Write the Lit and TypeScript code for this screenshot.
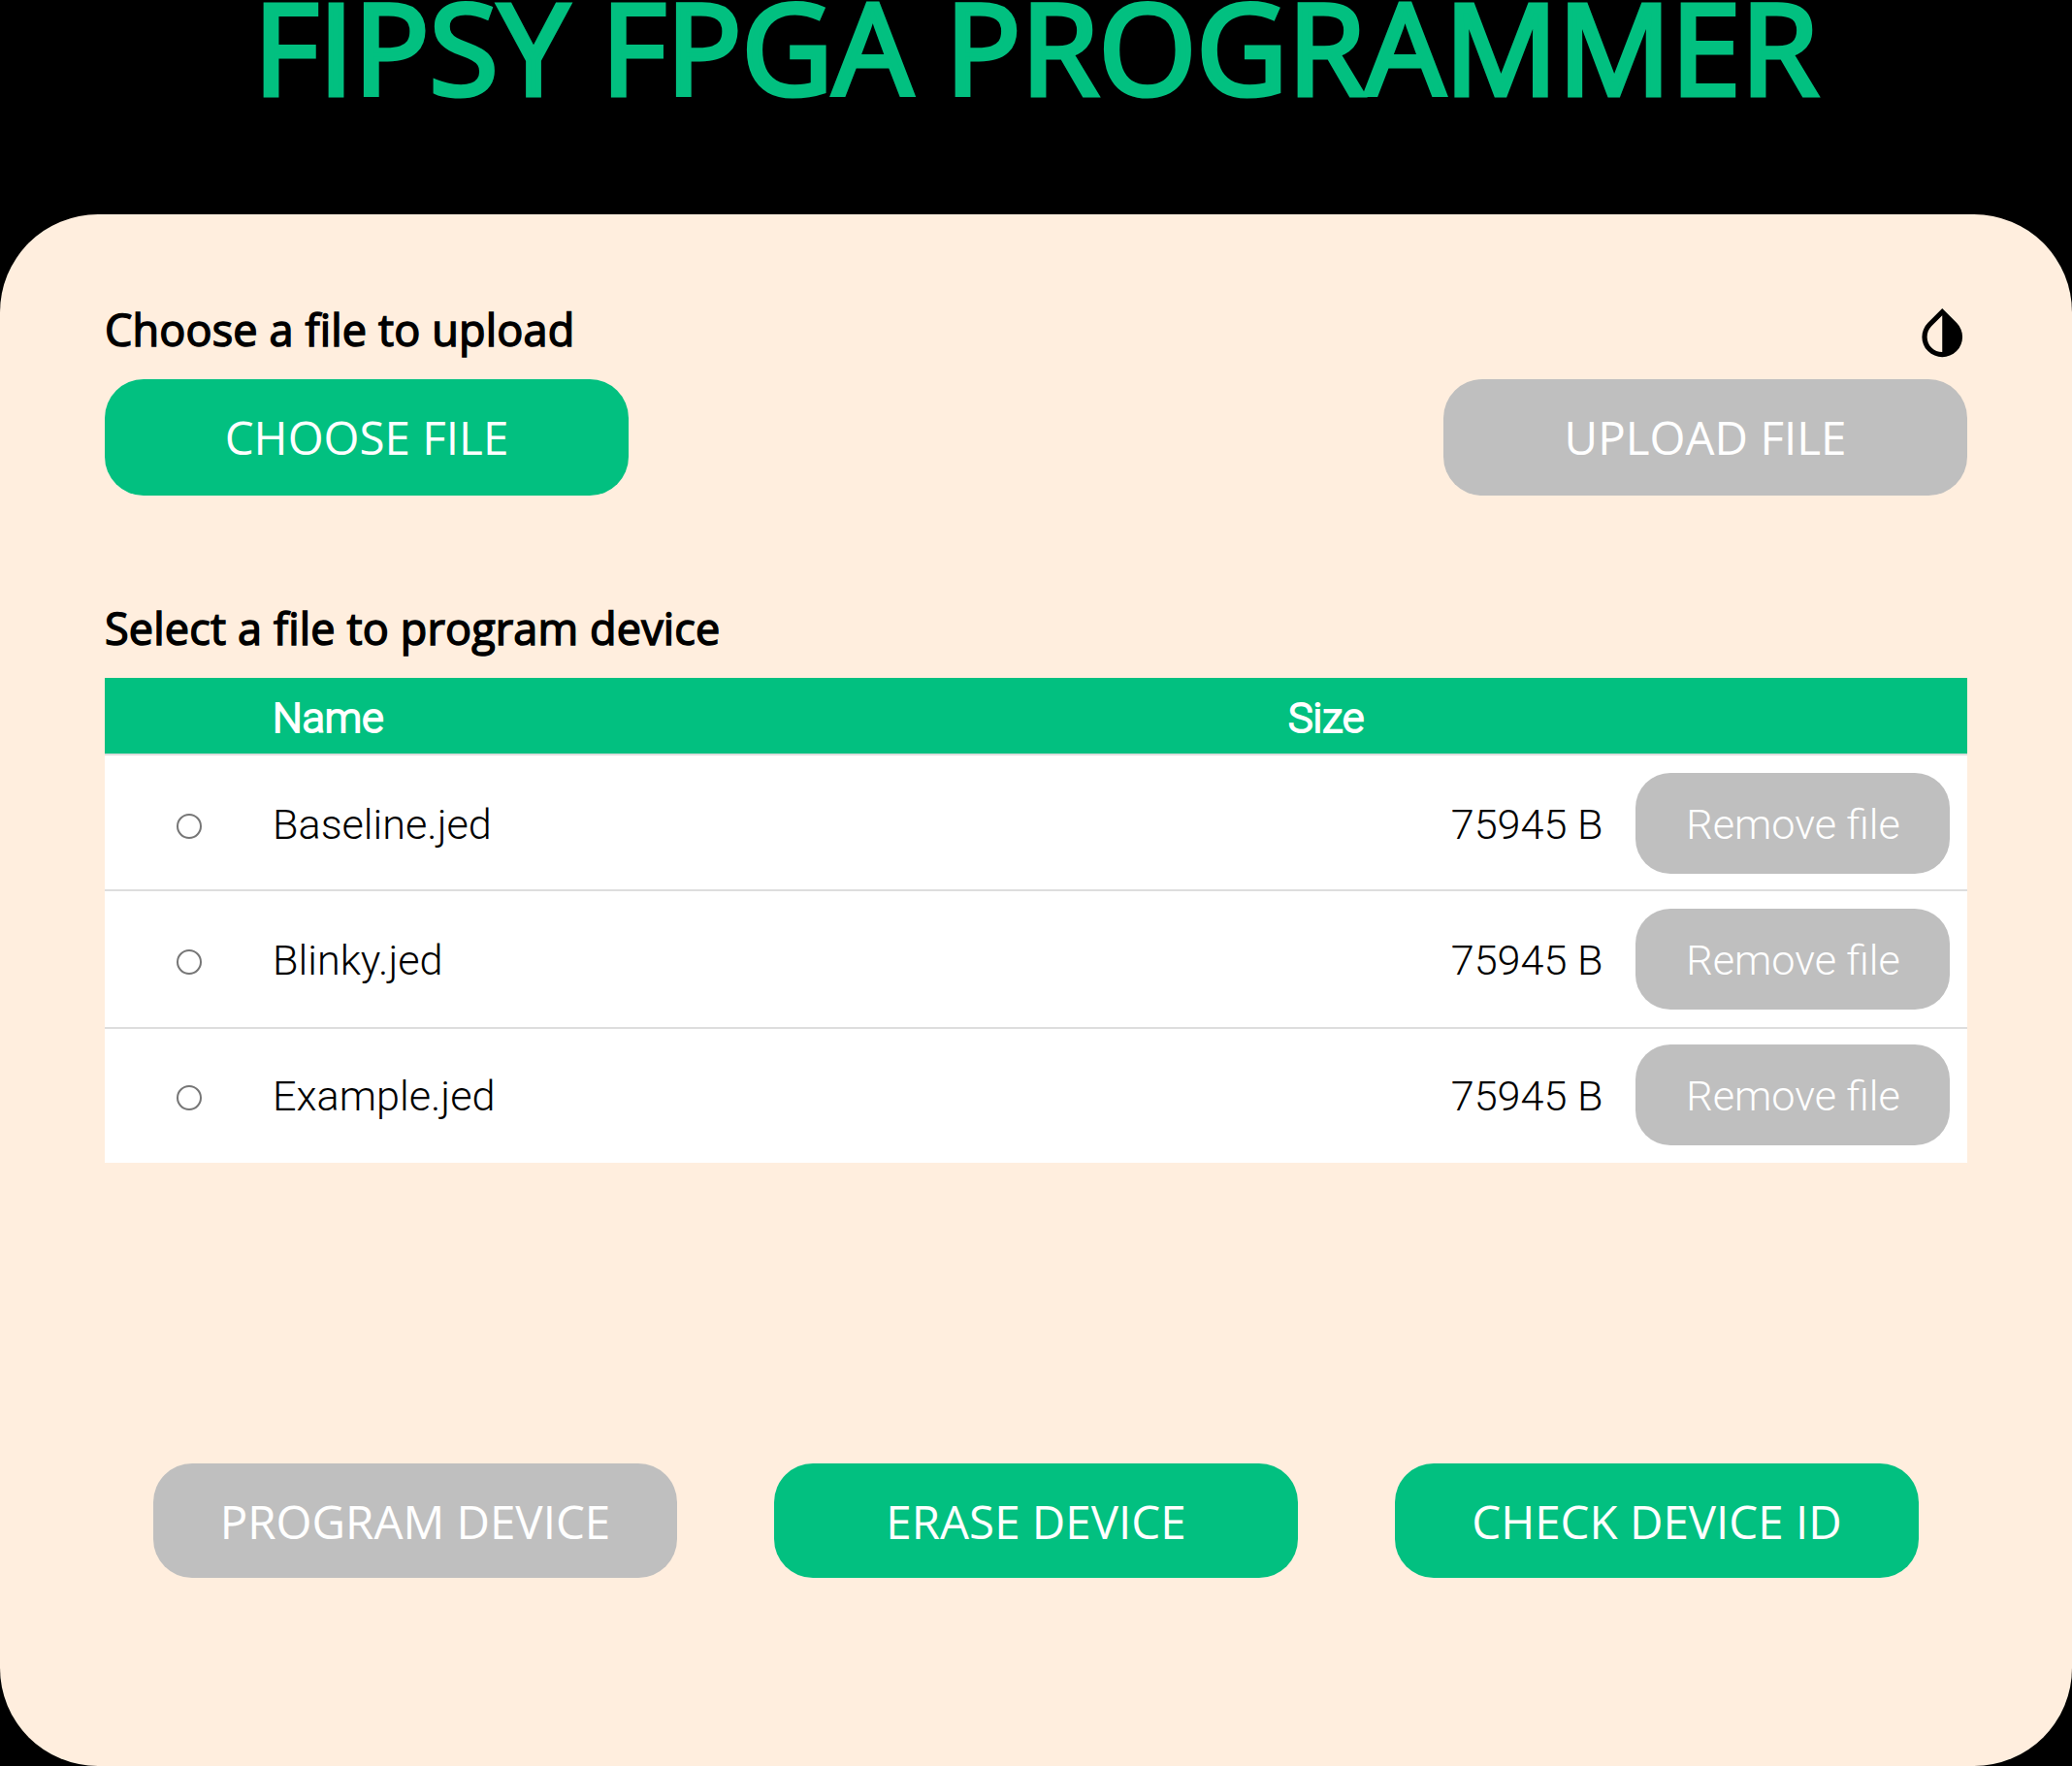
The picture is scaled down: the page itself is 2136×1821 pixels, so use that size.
import { LitElement, html, css } from "lit";
import { customElement, property, state } from "lit/decorators.js";

interface DeviceFile {
  name: string;
  size: string;
}

@customElement("pill-button")
class PillButton extends LitElement {
  @property({ type: Boolean, reflect: true }) disabled = false;

  static styles = css`
    :host {
      display: block;
      width: 540px;
      height: 120px;
    }
    .button {
      display: block;
      box-sizing: border-box;
      width: 100%;
      height: 100%;
      margin: 0;
      padding: var(--pill-nudge, 0) 0 0;
      border: 0;
      border-radius: 40px;
      background: #02c080;
      color: #fff;
      font: 400 47.5px/66px "Open Sans", sans-serif;
      white-space: nowrap;
    }
    .button:disabled {
      background: #bfbfbf;
    }
  `;

  render() {
    return html`<button class="button" ?disabled=${this.disabled}><slot></slot></button>`;
  }
}

@customElement("file-table")
class FileTable extends LitElement {
  @property({ attribute: false }) files: DeviceFile[] = [];

  static styles = css`
    :host {
      display: block;
      background: #fff;
      color: #000;
      font: 300 43.2px/52px Roboto, sans-serif;
    }
    .row {
      display: grid;
      grid-template-columns: 173px 1047px 324.5px 375.5px;
      align-items: start;
      height: 140px;
      box-sizing: border-box;
      border-top: 2px solid #ddd;
      padding-top: 18px;
    }
    .row:nth-child(3) {
      height: 142px;
    }
    .row:nth-child(4) {
      padding-top: 16px;
    }
    .head {
      height: 78px;
      padding-top: 16px;
      border-top: 0;
      background: #02c080;
      color: #fff;
      font-size: 43.2px;
      -webkit-text-stroke: 2px #fff;
    }
    .cell {
      margin-top: 28px;
    }
    .radio {
      appearance: none;
      box-sizing: border-box;
      width: 26px;
      height: 26px;
      margin: 42px 0 0 74px;
      border: 2px solid #767676;
      border-radius: 50%;
      background: #fff;
    }
    .size {
      text-align: right;
    }
    .remove {
      justify-self: end;
      box-sizing: border-box;
      width: 324px;
      height: 104px;
      margin: 0 18px 0 0;
      padding: 4px 0 0 1px;
      border: 0;
      border-radius: 36px;
      background: #bfbfbf;
      color: #fff;
      font: inherit;
    }
  `;

  render() {
    return html`
      <div class="row head">
        <span></span><span>Name</span><span>Size</span><span></span>
      </div>
      ${this.files.map(
        (file) => html`
          <div class="row">
            <input class="radio" type="radio" name="file" />
            <span class="cell">${file.name}</span>
            <span class="cell size">${file.size}</span>
            <button class="remove">Remove file</button>
          </div>
        `
      )}
    `;
  }
}

@customElement("app-root")
class AppRoot extends LitElement {
  @state() private files: DeviceFile[] = [
    { name: "Baseline.jed", size: "75945 B" },
    { name: "Blinky.jed", size: "75945 B" },
    { name: "Example.jed", size: "75945 B" },
  ];

  static styles = css`
    :host {
      display: flex;
      flex-direction: column;
      width: 2136px;
      height: 1821px;
      overflow: hidden;
      background: #000;
      font-family: "Open Sans", sans-serif;
    }
    .title {
      height: 221px;
      margin: 0;
      color: #02c080;
      font-size: 129.6px;
      font-weight: 400;
      line-height: 96px;
      text-align: center;
      white-space: nowrap;
      -webkit-text-stroke: 5px #02c080;
    }
    .card {
      flex: 1;
      display: flex;
      flex-direction: column;
      box-sizing: border-box;
      padding: 88px 108px 0;
      border-radius: 101px;
      background: #ffeede;
    }
    .bar {
      display: flex;
      justify-content: space-between;
      align-items: flex-start;
      height: 82px;
    }
    .heading {
      margin: 0;
      font-size: 45px;
      font-weight: 400;
      line-height: 62px;
      letter-spacing: 0.15px;
      -webkit-text-stroke: 1.5px #000;
    }
    .invert {
      width: 62.5px;
      height: 62.5px;
      margin: 3px -5.5px 0 0;
    }
    .upload {
      display: flex;
      justify-content: space-between;
    }
    .select {
      margin: 106px 0 20px;
    }
    .actions {
      display: flex;
      gap: 100px;
      padding: 310px 50px 0;
    }
    .actions pill-button {
      height: 118px;
      --pill-nudge: 2px;
    }
  `;

  render() {
    return html`
      <h1 class="title">FIPSY FPGA PROGRAMMER</h1>
      <main class="card">
        <div class="bar">
          <h2 class="heading">Choose a file to upload</h2>
          <svg class="invert" viewBox="0 0 24 24">
            <path
              d="M17.66 7.93L12 2.27 6.34 7.93c-3.12 3.12-3.12 8.19 0 11.31C7.9 20.8 9.95 21.58 12 21.58c2.05 0 4.1-.78 5.66-2.34 3.12-3.12 3.12-8.19 0-11.31zM12 19.59c-1.6 0-3.11-.62-4.24-1.76C6.62 16.69 6 15.19 6 13.59s.62-3.11 1.76-4.24L12 5.1v14.49z"
            />
          </svg>
        </div>
        <div class="upload">
          <pill-button>CHOOSE FILE</pill-button>
          <pill-button disabled>UPLOAD FILE</pill-button>
        </div>
        <h2 class="heading select">Select a file to program device</h2>
        <file-table .files=${this.files}></file-table>
        <div class="actions">
          <pill-button disabled>PROGRAM DEVICE</pill-button>
          <pill-button>ERASE DEVICE</pill-button>
          <pill-button>CHECK DEVICE ID</pill-button>
        </div>
      </main>
    `;
  }
}
